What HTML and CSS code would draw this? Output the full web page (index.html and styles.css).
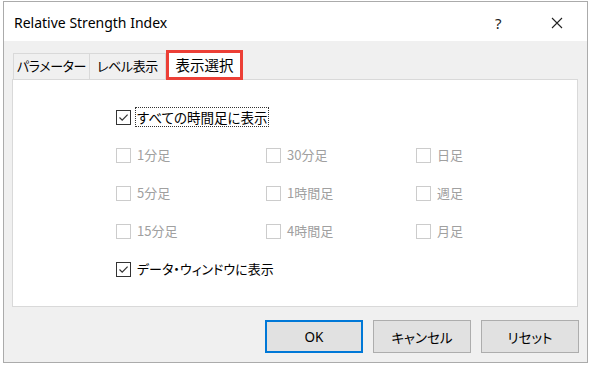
FILE: index.html
```html
<!DOCTYPE html>
<html lang="ja">
<head>
<meta charset="utf-8">
<link rel="stylesheet" href="styles.css">
</head>
<body>
<div class="window">
  <div class="titlebar">
    <span class="title">Relative Strength Index</span>
    <span class="help">?</span>
    <span class="close"><svg width="12" height="12" viewBox="0 0 12 12"><path d="M1 1L11 11M11 1L1 11" stroke="#222" stroke-width="1.1" fill="none"/></svg></span>
  </div>
  <div class="body">
    <div class="tabs">
      <div class="tab">パラメーター</div>
      <div class="tab">レベル表示</div>
      <div class="tab active">表示選択</div>
    </div>
    <div class="panel">
      <div class="row">
        <span class="cb on"><svg width="13" height="13" viewBox="0 0 13 13"><path d="M2.5 6.5L5.2 9.2L10.6 3.6" stroke="#333" stroke-width="1.2" fill="none"/></svg></span>
        <span class="label focus">すべての時間足に表示</span>
      </div>
      <div class="grid">
        <div class="item"><span class="cb"></span><span class="label dis">1分足</span></div>
        <div class="item"><span class="cb"></span><span class="label dis">30分足</span></div>
        <div class="item"><span class="cb"></span><span class="label dis">日足</span></div>
        <div class="item"><span class="cb"></span><span class="label dis">5分足</span></div>
        <div class="item"><span class="cb"></span><span class="label dis">1時間足</span></div>
        <div class="item"><span class="cb"></span><span class="label dis">週足</span></div>
        <div class="item"><span class="cb"></span><span class="label dis">15分足</span></div>
        <div class="item"><span class="cb"></span><span class="label dis">4時間足</span></div>
        <div class="item"><span class="cb"></span><span class="label dis">月足</span></div>
      </div>
      <div class="row">
        <span class="cb on"><svg width="13" height="13" viewBox="0 0 13 13"><path d="M2.5 6.5L5.2 9.2L10.6 3.6" stroke="#333" stroke-width="1.2" fill="none"/></svg></span>
        <span class="label">データ・ウィンドウに表示</span>
      </div>
    </div>
    <div class="buttons">
      <div class="btn default">OK</div>
      <div class="btn">キャンセル</div>
      <div class="btn">リセット</div>
    </div>
  </div>
</div>
</body>
</html>
```
FILE: styles.css
```css
html, body {
  margin: 0;
  padding: 0;
  background: #ffffff;
}
body {
  font-family: "Noto Sans CJK JP", "Noto Sans", sans-serif;
  color: #000;
}
.window {
  margin: 1px 0 0 3px;
  width: 583px;
  height: 360px;
  border: 1px solid #ababab;
  background: #f0f0f0;
  display: flex;
  flex-direction: column;
}
.titlebar {
  height: 39px;
  background: #ffffff;
  display: flex;
  align-items: center;
  padding-left: 10px;
  box-sizing: border-box;
}
.title {
  font-family: "Noto Sans", sans-serif;
  font-size: 14px;
  color: #000;
  flex: 1;
  position: relative;
  top: 1px;
}
.help {
  font-family: "Noto Sans", sans-serif;
  font-size: 15px;
  color: #222;
  width: 12px;
  margin-right: 44px;
  position: relative;
  top: 1px;
}
.close {
  width: 12px;
  height: 12px;
  margin-right: 24px;
  display: flex;
  position: relative;
  top: 1px;
}
.body {
  flex: 1;
  display: flex;
  flex-direction: column;
}
.tabs {
  display: flex;
  align-items: flex-end;
  margin: 9px 0 0 9px;
  height: 29px;
}
.tab {
  width: 77px;
  height: 26px;
  box-sizing: border-box;
  border: 1px solid #d9d9d9;
  border-bottom: none;
  margin-right: -1px;
  padding: 0;
  font-size: 13px;
  letter-spacing: -0.4px;
  font-feature-settings: "palt";
  line-height: 24px;
  white-space: nowrap;
  text-align: center;
  color: #000;
  background: #f0f0f0;
}
.tab.active {
  height: 30px;
  width: 77px;
  margin-bottom: -1px;
  margin-left: 1px;
  border: 3px solid #ec3f36;
  background: #ffffff;
  font-size: 14.5px;
  letter-spacing: 0;
  line-height: 23px;
  position: relative;
  z-index: 1;
}
.panel {
  margin-left: 8px;
  width: 566px;
  height: 228px;
  box-sizing: border-box;
  border: 1px solid #d9d9d9;
  background: #ffffff;
  padding: 18px 0 0 103px;
  display: flex;
  flex-direction: column;
}
.row, .item {
  height: 38px;
  display: flex;
  align-items: center;
}
.grid {
  display: grid;
  grid-template-columns: 150px 150px 150px;
}
.cb {
  width: 15px;
  height: 15px;
  box-sizing: border-box;
  border: 1px solid #cccccc;
  background: #fff;
  display: flex;
  align-items: center;
  justify-content: center;
  flex: none;
}
.cb.on {
  border-color: #333333;
}
.label {
  margin-left: 6px;
  font-size: 13px;
  font-feature-settings: "palt";
  line-height: 18px;
  white-space: nowrap;
  color: #000;
}
.label.dis {
  color: #a0a0a0;
}
.label.focus {
  margin-left: 5px;
  font-size: 13.5px;
  outline: 1px dotted #333;
  padding: 0 1px 0 1px;
}
.buttons {
  display: flex;
  justify-content: flex-end;
  gap: 10px;
  margin-top: 13px;
  padding-right: 8px;
}
.btn {
  width: 98px;
  height: 33px;
  box-sizing: border-box;
  border: 1px solid #adadad;
  background: #e1e1e1;
  font-size: 13.5px;
  font-feature-settings: "palt";
  display: flex;
  align-items: center;
  justify-content: center;
  color: #000;
}
.btn.default {
  border: 2px solid #0078d7;
  font-family: "Noto Sans", sans-serif;
}
```
